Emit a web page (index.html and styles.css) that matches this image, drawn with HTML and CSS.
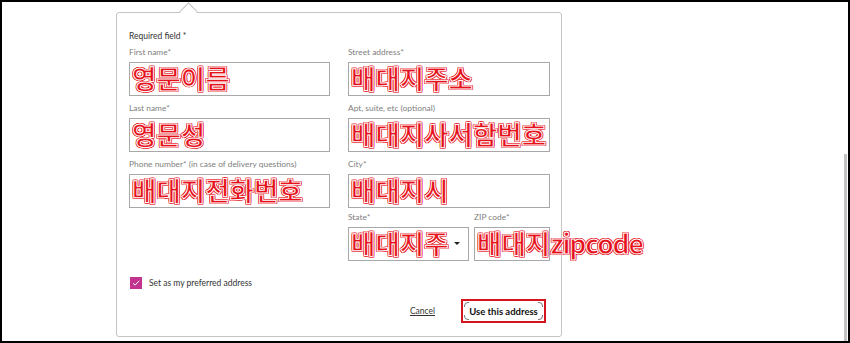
FILE: index.html
```html
<!DOCTYPE html>
<html lang="en">
<head>
<meta charset="utf-8">
<title>Address form</title>
<link rel="stylesheet" href="styles.css">
</head>
<body>
<div class="frame">
  <div class="card">
    <div class="required">Required field *</div>
    <div class="cols">
      <div class="col">
        <div class="field">
          <div class="label">First name*</div>
          <div class="input"><span class="mark">영문이름</span></div>
        </div>
        <div class="field">
          <div class="label">Last name*</div>
          <div class="input"><span class="mark">영문성</span></div>
        </div>
        <div class="field">
          <div class="label">Phone number* (in case of delivery questions)</div>
          <div class="input"><span class="mark">배대지전화번호</span></div>
        </div>
      </div>
      <div class="col">
        <div class="field">
          <div class="label">Street address*</div>
          <div class="input"><span class="mark">배대지주소</span></div>
        </div>
        <div class="field">
          <div class="label">Apt, suite, etc (optional)</div>
          <div class="input"><span class="mark">배대지사서함번호</span></div>
        </div>
        <div class="field">
          <div class="label">City*</div>
          <div class="input"><span class="mark">배대지시</span></div>
        </div>
        <div class="pair">
          <div class="field state">
            <div class="label">State*</div>
            <div class="input select"><span class="mark">배대지주</span><span class="caret"></span></div>
          </div>
          <div class="field zip">
            <div class="label">ZIP code*</div>
            <div class="input"><span class="mark">배대지<span class="latin">zipcode</span></span></div>
          </div>
        </div>
      </div>
    </div>
    <div class="check-row">
      <span class="checkbox"><svg width="12" height="12" viewBox="0 0 12 12"><path d="M3 6.2 L5.1 8.2 L9.2 3.8" fill="none" stroke="#fff" stroke-width="1"/></svg></span>
      <span class="check-label">Set as my preferred address</span>
    </div>
    <div class="actions">
      <span class="cancel">Cancel</span>
      <span class="primary"><span class="primary-inner">Use this address</span></span>
    </div>
  </div>
  <div class="scroll-thumb"></div>
</div>
</body>
</html>
```
FILE: styles.css
```css
html, body {
  margin: 0;
  padding: 0;
  background: #fff;
}
.frame {
  position: relative;
  width: 850px;
  height: 343px;
  box-sizing: border-box;
  border: 2px solid #000;
  background: #fff;
  overflow: hidden;
  font-family: Lato, "Noto Sans", sans-serif;
}
.card {
  position: relative;
  margin: 10px 0 0 114px;
  width: 446px;
  box-sizing: border-box;
  border: 1px solid #c4c4c4;
  border-radius: 3px;
  padding: 17px 11px 13px 12px;
  background: #fff;
}
.card::before {
  content: "";
  position: absolute;
  top: -8px;
  left: 65px;
  width: 12px;
  height: 12px;
  background: #fff;
  border-left: 1px solid #c4c4c4;
  border-top: 1px solid #c4c4c4;
  transform: rotate(45deg);
}
.required {
  font-size: 8.5px;
  line-height: 12px;
  height: 12px;
  color: #333;
  margin-bottom: 4px;
}
.cols {
  display: flex;
  gap: 18px;
}
.col {
  display: flex;
  flex-direction: column;
  gap: 6px;
}
.col:first-child { width: 201px; }
.col:last-child { width: 202px; }
.label {
  font-size: 8.4px;
  line-height: 12px;
  height: 12px;
  color: #808080;
  margin-bottom: 4px;
  white-space: nowrap;
}
.input {
  height: 34px;
  box-sizing: border-box;
  border: 1px solid #a8a8a8;
  padding: 0 2px 2px 2px;
  display: flex;
  align-items: center;
  white-space: nowrap;
}
.pair {
  display: flex;
  gap: 5px;
  margin-top: -3px;
}
.state { width: 121px; }
.zip { width: 76px; }
.select {
  padding-right: 8px;
}
.caret {
  margin-left: auto;
  width: 0;
  height: 0;
  border-left: 3px solid transparent;
  border-right: 3px solid transparent;
  border-top: 3px solid #222;
}
.mark {
  font-family: "Noto Sans CJK KR", sans-serif;
  font-weight: 700;
  font-size: 26.5px;
  line-height: 28px;
  letter-spacing: 0;
  color: #e5121b;
  -webkit-text-stroke: 1px #fff;
  text-shadow: 1px 0 0 #e5121b, -1px 0 0 #e5121b, 0 1px 0 #e5121b, 0 -1px 0 #e5121b,
    1px 1px 0 #e5121b, -1px -1px 0 #e5121b, 1px -1px 0 #e5121b, -1px 1px 0 #e5121b;
}
.latin {
  letter-spacing: -1.2px;
}
.check-row {
  display: flex;
  align-items: center;
  gap: 7px;
  height: 12px;
  margin-top: 16px;
  padding-left: 1px;
}
.checkbox {
  width: 12px;
  height: 12px;
  background: #c3328f;
  display: block;
}
.checkbox svg { display: block; }
.check-label {
  font-size: 8.5px;
  color: #333;
}
.actions {
  display: flex;
  justify-content: flex-end;
  align-items: center;
  gap: 26px;
  margin-top: 10px;
  padding-right: 4px;
}
.cancel {
  font-size: 8.5px;
  color: #333;
  text-decoration: underline;
}
.primary {
  width: 85px;
  height: 24px;
  box-sizing: border-box;
  border: 2px solid #d4161c;
  padding: 1px;
  display: block;
}
.primary-inner {
  position: relative;
  display: flex;
  align-items: center;
  justify-content: center;
  height: 100%;
  box-sizing: border-box;
  border: 1px solid #777;
  border-radius: 4px;
  font-size: 9.5px;
  font-weight: 700;
  color: #111;
}
.primary-inner::before {
  content: "";
  position: absolute;
  left: 4px;
  right: 4px;
  top: -1px;
  bottom: -1px;
  border-top: 1px solid #fff;
  border-bottom: 1px solid #fff;
}
.primary-inner::after {
  content: "";
  position: absolute;
  top: 4px;
  bottom: 4px;
  left: -1px;
  right: -1px;
  border-left: 1px solid #fff;
  border-right: 1px solid #fff;
}
.scroll-thumb {
  position: absolute;
  right: 1px;
  top: 152px;
  bottom: 0;
  width: 3px;
  background: #c2c2c2;
}
```
